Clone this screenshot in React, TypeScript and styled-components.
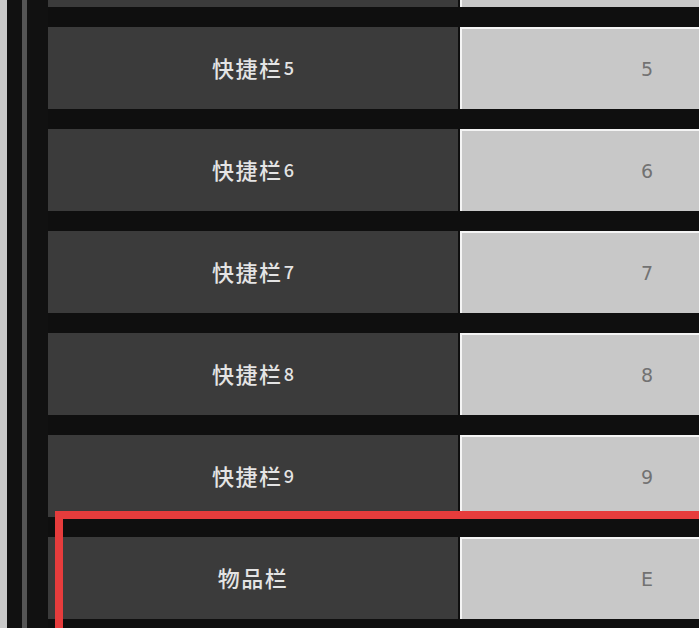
import React from "react";
import styled, { createGlobalStyle } from "styled-components";

const Global = createGlobalStyle`
  html, body { margin: 0; padding: 0; background: #0f0f0f; }
  body { font-family: "Noto Sans CJK SC", "Noto Sans", sans-serif; }
`;

const Screen = styled.div`
  position: relative;
  width: 699px;
  height: 628px;
  overflow: hidden;
  display: flex;
  background: #0f0f0f;
`;

const Strip = styled.div<{ $w: number; $c: string }>`
  flex: 0 0 ${(p) => p.$w}px;
  background: ${(p) => p.$c};
`;

const List = styled.div`
  display: flex;
  flex-direction: column;
  gap: 20px;
  margin-top: -75px;
`;

const Row = styled.div`
  display: flex;
  gap: 2px;
  height: 82px;
  flex: 0 0 82px;
`;

const Label = styled.div`
  flex: 0 0 410px;
  background: #3b3b3b;
  color: #e4e4e4;
  display: flex;
  align-items: center;
  justify-content: center;
  font-size: 22px;
  font-weight: 500;
  letter-spacing: 1.5px;
  padding-bottom: 2px;
  box-sizing: border-box;
`;

const Digit = styled.span`
  font-size: 18px;
  letter-spacing: 0;
  margin-left: 1px;
`;

const KeyCell = styled.div`
  flex: 0 0 372px;
  box-sizing: border-box;
  background: #c8c8c8;
  border-top: 2px solid #f4f4f4;
  border-left: 2px solid #f4f4f4;
  color: #727272;
  display: flex;
  align-items: center;
  justify-content: center;
  font-size: 19px;
  font-family: "DejaVu Sans", sans-serif;
`;

const Highlight = styled.div`
  position: absolute;
  left: 55px;
  top: 511px;
  width: 720px;
  height: 200px;
  border: 8px solid #e63c3c;
  box-sizing: border-box;
  pointer-events: none;
`;

type Item = { name: string; digit?: string; key: string };

const items: Item[] = [
  { name: "", key: "" },
  { name: "快捷栏", digit: "5", key: "5" },
  { name: "快捷栏", digit: "6", key: "6" },
  { name: "快捷栏", digit: "7", key: "7" },
  { name: "快捷栏", digit: "8", key: "8" },
  { name: "快捷栏", digit: "9", key: "9" },
  { name: "物品栏", key: "E" },
];

export default function App() {
  return (
    <>
      <Global />
      <Screen>
        <Strip $w={7} $c="#c9c9c9" />
        <Strip $w={15} $c="#111111" />
        <Strip $w={5} $c="#555555" />
        <Strip $w={21} $c="#111111" />
        <List>
          {items.map((it, i) => (
            <Row key={i}>
              <Label>
                {it.name}
                {it.digit && <Digit>{it.digit}</Digit>}
              </Label>
              <KeyCell>{it.key}</KeyCell>
            </Row>
          ))}
        </List>
        <Highlight />
      </Screen>
    </>
  );
}
